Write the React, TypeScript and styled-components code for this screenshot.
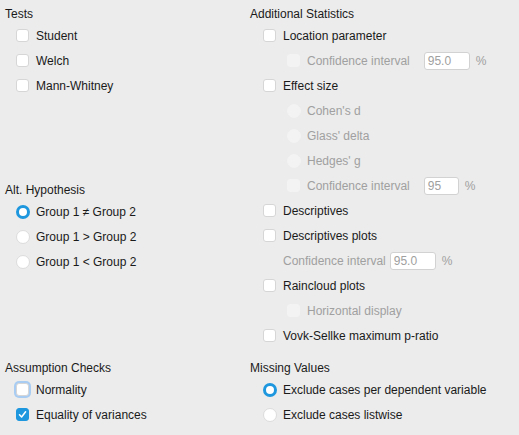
import React from 'react'
import styled, { createGlobalStyle } from 'styled-components'

const Global = createGlobalStyle`
	html, body {
		margin: 0;
		padding: 0;
		background: #ececec;
	}
	body {
		font-family: "Liberation Sans", Arial, sans-serif;
		font-size: 12px;
		color: #1a1a1a;
	}
`

const BLUE = '#1e97df'

const Page = styled.div`
	box-sizing: border-box;
	width: 519px;
	height: 435px;
	padding: 5px 0 0 5px;
	display: grid;
	grid-template-columns: 245px 1fr;
	grid-template-rows: auto auto;
	align-content: start;
	row-gap: 11px;
`

const Column = styled.div<{ $gap?: number }>`
	display: flex;
	flex-direction: column;
	gap: ${p => p.$gap ?? 0}px;
`

const Group = styled.div`
	display: flex;
	flex-direction: column;
`

const Title = styled.div`
	height: 18px;
	line-height: 18px;
`

const Row = styled.div<{ $indent: number; $disabled?: boolean }>`
	height: 25px;
	display: flex;
	align-items: center;
	padding-left: ${p => p.$indent}px;
	color: ${p => (p.$disabled ? '#a0a0a0' : '#1a1a1a')};
	white-space: nowrap;
`

const Box = styled.span<{ $checked?: boolean; $disabled?: boolean; $focus?: boolean }>`
	box-sizing: border-box;
	width: 13px;
	height: 13px;
	border-radius: 3px;
	margin-right: 7px;
	flex: none;
	display: flex;
	align-items: center;
	justify-content: center;
	background: ${p => (p.$checked ? BLUE : p.$disabled ? '#f3f3f3' : '#ffffff')};
	border: 1px solid ${p => (p.$checked ? BLUE : p.$disabled ? '#f3f3f3' : '#d6d6d6')};
	box-shadow: ${p => (p.$focus ? '0 0 0 2px #a9cdf2' : 'none')};
`

const Radio = styled.span<{ $checked?: boolean; $disabled?: boolean }>`
	box-sizing: border-box;
	width: 14px;
	height: 14px;
	border-radius: 50%;
	margin-right: 6px;
	flex: none;
	background: ${p => (p.$disabled ? '#f3f3f3' : '#ffffff')};
	border: ${p => (p.$checked ? `3px solid ${BLUE}` : `1px solid ${p.$disabled ? '#f3f3f3' : '#dcdcdc'}`)};
`

const Field = styled.span<{ $width: number }>`
	box-sizing: border-box;
	width: ${p => p.$width}px;
	height: 18px;
	margin-left: 14px;
	padding-left: 3px;
	line-height: 16px;
	background: #ffffff;
	border: 1px solid #d2d2d2;
	border-radius: 3px;
	color: #a0a0a0;
`

const FieldTight = styled(Field)`
	margin-left: 4px;
`

const Unit = styled.span`
	margin-left: 6px;
	color: #a0a0a0;
`

function Check() {
	return (
		<svg width="9" height="9" viewBox="0 0 9 9">
			<path d="M1.5 4.8 L3.6 7 L7.6 1.8" fill="none" stroke="#fff" strokeWidth="1.5" strokeLinecap="round" strokeLinejoin="round" />
		</svg>
	)
}

type ItemProps = {
	label: string
	indent: number
	checked?: boolean
	disabled?: boolean
	focus?: boolean
	radio?: boolean
	children?: React.ReactNode
}

function Item({ label, indent, checked, disabled, focus, radio, children }: ItemProps) {
	return (
		<Row $indent={indent} $disabled={disabled}>
			{radio
				? <Radio $checked={checked} $disabled={disabled} />
				: <Box $checked={checked} $disabled={disabled} $focus={focus}>{checked && <Check />}</Box>}
			{label}
			{children}
		</Row>
	)
}

export default function App() {
	return (
		<>
			<Global />
			<Page>
				<Column $gap={83}>
					<Group>
						<Title>Tests</Title>
						<Item indent={11} label="Student" />
						<Item indent={11} label="Welch" />
						<Item indent={11} label="Mann-Whitney" />
					</Group>
					<Group>
						<Title>Alt. Hypothesis</Title>
						<Item indent={11} radio checked label="Group 1 ≠ Group 2" />
						<Item indent={11} radio label="Group 1 > Group 2" />
						<Item indent={11} radio label="Group 1 < Group 2" />
					</Group>
				</Column>
				<Column>
					<Group>
						<Title>Additional Statistics</Title>
						<Item indent={13} label="Location parameter" />
						<Item indent={37} disabled label="Confidence interval">
							<Field $width={46}>95.0</Field>
							<Unit>%</Unit>
						</Item>
						<Item indent={13} label="Effect size" />
						<Item indent={37} radio disabled label="Cohen's d" />
						<Item indent={37} radio disabled label="Glass' delta" />
						<Item indent={37} radio disabled label="Hedges' g" />
						<Item indent={37} disabled label="Confidence interval">
							<Field $width={35}>95</Field>
							<Unit>%</Unit>
						</Item>
						<Item indent={13} label="Descriptives" />
						<Item indent={13} label="Descriptives plots" />
						<Row $indent={33} $disabled>
							Confidence interval
							<FieldTight $width={46}>95.0</FieldTight>
							<Unit>%</Unit>
						</Row>
						<Item indent={13} label="Raincloud plots" />
						<Item indent={37} disabled label="Horizontal display" />
						<Item indent={13} label="Vovk-Sellke maximum p-ratio" />
					</Group>
				</Column>
				<Group>
					<Title>Assumption Checks</Title>
					<Item indent={11} focus label="Normality" />
					<Item indent={11} checked label="Equality of variances" />
				</Group>
				<Group>
					<Title>Missing Values</Title>
					<Item indent={13} radio checked label="Exclude cases per dependent variable" />
					<Item indent={13} radio label="Exclude cases listwise" />
				</Group>
			</Page>
		</>
	)
}
